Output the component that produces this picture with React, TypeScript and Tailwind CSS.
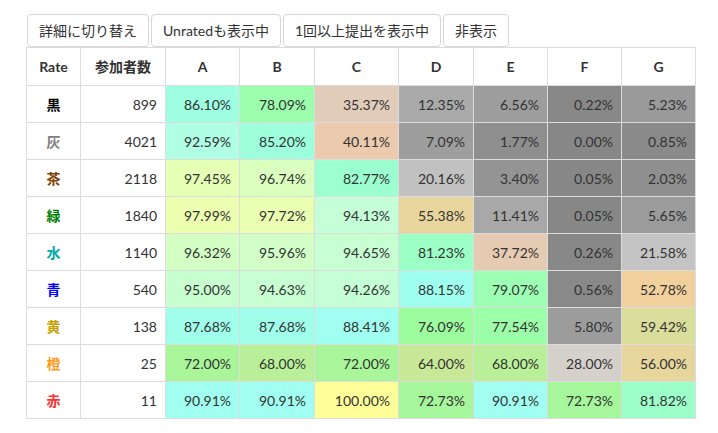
import React from "react";

type Row = {
	rate: string;
	color: string;
	count: number;
	values: number[];
};

const rows: Row[] = [
	{ rate: "黒", color: "text-[#000000]", count: 899, values: [86.1, 78.09, 35.37, 12.35, 6.56, 0.22, 5.23] },
	{ rate: "灰", color: "text-[#808080]", count: 4021, values: [92.59, 85.2, 40.11, 7.09, 1.77, 0.0, 0.85] },
	{ rate: "茶", color: "text-[#804000]", count: 2118, values: [97.45, 96.74, 82.77, 20.16, 3.4, 0.05, 2.03] },
	{ rate: "緑", color: "text-[#008000]", count: 1840, values: [97.99, 97.72, 94.13, 55.38, 11.41, 0.05, 5.65] },
	{ rate: "水", color: "text-[#00a8a8]", count: 1140, values: [96.32, 95.96, 94.65, 81.23, 37.72, 0.26, 21.58] },
	{ rate: "青", color: "text-[#0000ff]", count: 540, values: [95.0, 94.63, 94.26, 88.15, 79.07, 0.56, 52.78] },
	{ rate: "黄", color: "text-[#c8a000]", count: 138, values: [87.68, 87.68, 88.41, 76.09, 77.54, 5.8, 59.42] },
	{ rate: "橙", color: "text-[#ff9a1a]", count: 25, values: [72.0, 68.0, 72.0, 64.0, 68.0, 28.0, 56.0] },
	{ rate: "赤", color: "text-[#ff3030]", count: 11, values: [90.91, 90.91, 100.0, 72.73, 90.91, 72.73, 81.82] },
];

const problems = ["A", "B", "C", "D", "E", "F", "G"];
const problemWidths = ["w-[74px]", "w-[75px]", "w-[84px]", "w-[75px]", "w-[74px]", "w-[74px]", "w-[74px]"];

// percentage -> background, piecewise linear between sampled stops
const stops: [number, [number, number, number]][] = [
	[0, [135, 135, 135]],
	[5, [154, 154, 154]],
	[12, [169, 169, 169]],
	[21, [195, 195, 195]],
	[28, [212, 208, 202]],
	[36, [226, 203, 184]],
	[40, [235, 202, 173]],
	[53, [242, 208, 156]],
	[56, [230, 214, 155]],
	[59.5, [217, 222, 154]],
	[64, [200, 232, 152]],
	[68, [184, 239, 152]],
	[72, [168, 245, 154]],
	[76, [156, 253, 158]],
	[79, [156, 255, 178]],
	[82, [156, 255, 204]],
	[86, [158, 255, 224]],
	[89, [160, 255, 244]],
	[91, [160, 255, 240]],
	[92.6, [176, 254, 228]],
	[94.3, [198, 255, 214]],
	[95, [200, 255, 208]],
	[96.3, [212, 255, 196]],
	[97.5, [230, 255, 180]],
	[98, [236, 255, 176]],
	[100, [255, 255, 153]],
];

function cellColor(p: number) {
	for (let i = 1; i < stops.length; i++) {
		const [p1, c1] = stops[i];
		const [p0, c0] = stops[i - 1];
		if (p <= p1) {
			const t = (p - p0) / (p1 - p0);
			const c = c0.map((v, k) => Math.round(v + (c1[k] - v) * t));
			return `rgb(${c[0]}, ${c[1]}, ${c[2]})`;
		}
	}
	return "rgb(255, 255, 153)";
}

const buttons = ["詳細に切り替え", "Unratedも表示中", "1回以上提出を表示中", "非表示"];

export default function App() {
	return (
		<div
			className="min-h-[433px] bg-white pl-[26px] pt-[14px] text-[14px] text-[#333]"
			style={{ fontFamily: 'Lato, "Noto Sans CJK JP", sans-serif' }}
		>
			<div className="flex gap-[2px] pl-px">
				{buttons.map((label) => (
					<button
						key={label}
						className="h-[33px] rounded-[4px] border border-[#d6d6d6] bg-white px-[11px] leading-[21px] text-[#333]"
					>
						{label}
					</button>
				))}
			</div>
			<table className="table-fixed border-collapse border border-[#dcdcdc]">
				<thead>
					<tr className="h-[38px]">
						<th className="w-[54px] border border-[#dcdcdc] font-bold">Rate</th>
						<th className="w-[85px] border border-[#dcdcdc] font-bold">参加者数</th>
						{problems.map((p, i) => (
							<th key={p} className={`${problemWidths[i]} border border-[#dcdcdc] font-bold`}>
								{p}
							</th>
						))}
					</tr>
				</thead>
				<tbody>
					{rows.map((row) => (
						<tr key={row.rate} className="h-[37px]">
							<td className={`border border-[#dcdcdc] text-center font-bold ${row.color}`}>
								{row.rate}
							</td>
							<td className="border border-[#dcdcdc] pr-2 text-right">{row.count}</td>
							{row.values.map((v, i) => (
								<td
									key={problems[i]}
									className="border border-[#dcdcdc] pr-2 text-right"
									style={{ backgroundColor: cellColor(v) }}
								>
									{v.toFixed(2)}%
								</td>
							))}
						</tr>
					))}
				</tbody>
			</table>
		</div>
	);
}
